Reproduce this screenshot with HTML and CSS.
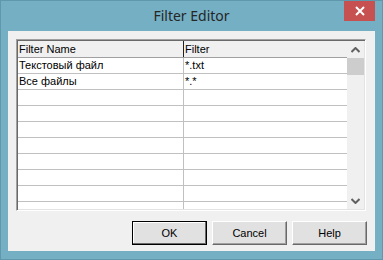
FILE: index.html
```html
<!DOCTYPE html>
<html lang="en">
<head>
    <meta charset="UTF-8">
    <title>Filter Editor</title>
    <link rel="stylesheet" href="styles.css">
</head>
<body>
    <div class="window">
        <div class="titlebar">
            <span class="title">Filter Editor</span>
            <button class="close-button" title="Close">
                <svg width="10" height="10" viewBox="0 0 10 10">
                    <path d="M1 1 L9 9 M9 1 L1 9" stroke="#fff" stroke-width="2"/>
                </svg>
            </button>
        </div>

        <div class="client">
            <div class="list-view">
                <div class="list-body">
                    <div class="list-row list-header">
                        <div class="cell cell-name">Filter Name</div>
                        <div class="cell cell-filter">Filter</div>
                    </div>
                    <div class="list-row">
                        <div class="cell cell-name">Текстовый файл</div>
                        <div class="cell cell-filter">*.txt</div>
                    </div>
                    <div class="list-row">
                        <div class="cell cell-name">Все файлы</div>
                        <div class="cell cell-filter">*.*</div>
                    </div>
                    <div class="list-row"><div class="cell cell-name"></div><div class="cell cell-filter"></div></div>
                    <div class="list-row"><div class="cell cell-name"></div><div class="cell cell-filter"></div></div>
                    <div class="list-row"><div class="cell cell-name"></div><div class="cell cell-filter"></div></div>
                    <div class="list-row"><div class="cell cell-name"></div><div class="cell cell-filter"></div></div>
                    <div class="list-row"><div class="cell cell-name"></div><div class="cell cell-filter"></div></div>
                    <div class="list-row"><div class="cell cell-name"></div><div class="cell cell-filter"></div></div>
                    <div class="list-row"><div class="cell cell-name"></div><div class="cell cell-filter"></div></div>
                    <div class="list-row"><div class="cell cell-name"></div><div class="cell cell-filter"></div></div>
                </div>
                <div class="scrollbar">
                    <div class="scroll-arrow">
                        <svg width="9" height="6" viewBox="0 0 9 6">
                            <path d="M0.5 5 L4.5 1 L8.5 5" fill="none" stroke="#606060" stroke-width="2"/>
                        </svg>
                    </div>
                    <div class="scroll-thumb"></div>
                    <div class="scroll-track"></div>
                    <div class="scroll-arrow">
                        <svg width="9" height="6" viewBox="0 0 9 6">
                            <path d="M0.5 1 L4.5 5 L8.5 1" fill="none" stroke="#606060" stroke-width="2"/>
                        </svg>
                    </div>
                </div>
            </div>

            <div class="buttons">
                <button class="dlg-button default-button">OK</button>
                <button class="dlg-button">Cancel</button>
                <button class="dlg-button">Help</button>
            </div>
        </div>
    </div>
</body>
</html>
```

FILE: styles.css
```css
body {
    margin: 0;
    background-color: #74afc4;
    font-family: "Liberation Sans", Arial, sans-serif;
    font-size: 11px;
}

.window {
    width: 383px;
    height: 260px;
    box-sizing: border-box;
    background-color: #74afc4;
    border: 1px solid #5f98ad;
    padding: 0 7px 8px 7px;
    display: flex;
    flex-direction: column;
}

.titlebar {
    height: 30px;
    position: relative;
    display: flex;
    justify-content: center;
    align-items: center;
}

.title {
    font-family: "Noto Sans", sans-serif;
    font-size: 14px;
    color: #262626;
    margin-top: -1px;
}

.close-button {
    position: absolute;
    top: 0;
    right: 0;
    width: 31px;
    height: 20px;
    border: none;
    padding: 0;
    background-color: #c75050;
    display: flex;
    align-items: center;
    justify-content: center;
}

.client {
    flex: 1;
    background-color: #f0f0f0;
    padding: 8px 8px 6px 8px;
    display: flex;
    flex-direction: column;
}

/* sunken list box */
.list-view {
    height: 172px;
    margin-right: 1px;
    box-sizing: border-box;
    border-top: 1px solid #a0a0a0;
    border-left: 1px solid #a0a0a0;
    border-right: 1px solid #ffffff;
    border-bottom: 1px solid #ffffff;
    box-shadow: inset 1px 1px 0 #696969, inset -1px -1px 0 #e3e3e3;
    padding: 1px;
    display: flex;
    background-color: #ffffff;
}

.list-body {
    flex: 1;
    overflow: hidden;
}

.list-row {
    display: flex;
    height: 16px;
    box-sizing: border-box;
    border-bottom: 1px solid #c0c0c0;
    line-height: 15px;
    color: #000;
}

.list-header {
    height: 17px;
    background-color: #f0f0f0;
    border-bottom: 1px solid #a0a0a0;
    line-height: 16px;
}

.cell {
    padding-left: 1px;
    white-space: nowrap;
}

.cell-name {
    width: 164px;
    border-right: 1px solid #c0c0c0;
}

.list-header .cell-name {
    border-right: 1px solid #202020;
}

.cell-filter {
    flex: 1;
}

.scrollbar {
    width: 17px;
    background-color: #f0f0f0;
    display: flex;
    flex-direction: column;
}

.scroll-arrow {
    height: 17px;
    display: flex;
    align-items: center;
    justify-content: center;
}

.scroll-thumb {
    height: 17px;
    background-color: #cdcdcd;
}

.scroll-track {
    flex: 1;
}

.buttons {
    margin-top: 10px;
    display: flex;
    justify-content: flex-end;
    gap: 5px;
}

.dlg-button {
    width: 75px;
    height: 24px;
    box-sizing: border-box;
    font-family: "Liberation Sans", Arial, sans-serif;
    font-size: 11px;
    color: #000;
    background-color: #e1e1e1;
    border-top: 1px solid #ffffff;
    border-left: 1px solid #ffffff;
    border-right: 1px solid #696969;
    border-bottom: 1px solid #696969;
    box-shadow: inset -1px -1px 0 #a0a0a0;
    padding: 0;
}

.default-button {
    border: 1px solid #000;
    box-shadow: inset -1px -1px 0 #696969, inset 1px 1px 0 #ffffff;
}
```
